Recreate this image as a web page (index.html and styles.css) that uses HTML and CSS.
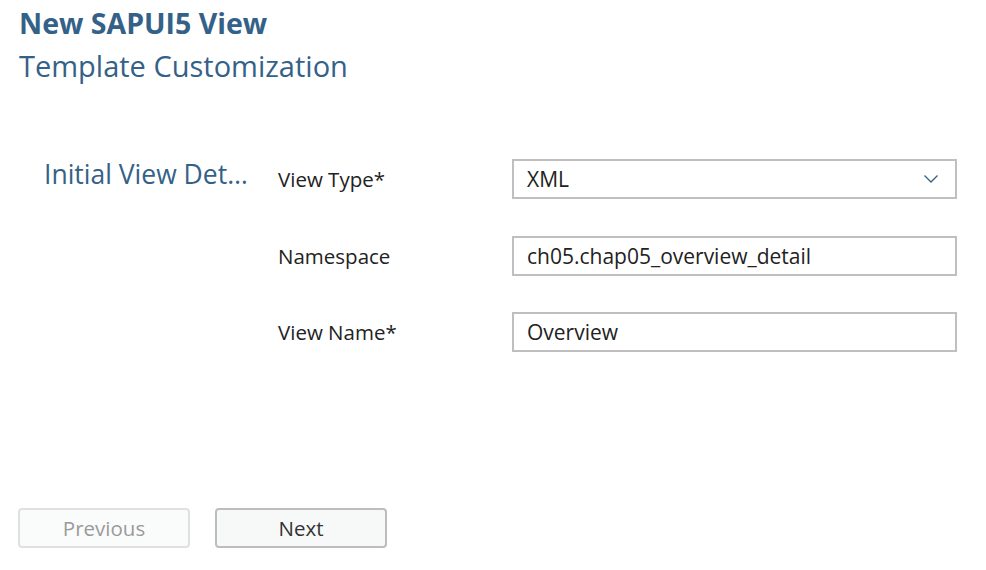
FILE: index.html
```html
<!DOCTYPE html>
<html>
<head>
<meta charset="utf-8">
<link rel="stylesheet" href="styles.css">
</head>
<body>
<div class="page">
  <header class="header">
    <h1 class="title">New SAPUI5 View</h1>
    <h2 class="subtitle">Template Customization</h2>
  </header>
  <section class="step">
    <div class="step-title">Initial View Details</div>
    <div class="form">
      <div class="row">
        <label class="label">View Type*</label>
        <div class="field select">
          <span>XML</span>
          <svg class="chev" width="16" height="10" viewBox="0 0 16 10"><path d="M1.5 1.5 L8 8 L14.5 1.5" fill="none" stroke="#346187" stroke-width="1.3"/></svg>
        </div>
      </div>
      <div class="row">
        <label class="label">Namespace</label>
        <div class="field">ch05.chap05_overview_detail</div>
      </div>
      <div class="row">
        <label class="label">View Name*</label>
        <div class="field">Overview</div>
      </div>
    </div>
  </section>
  <footer class="footer">
    <button class="btn disabled">Previous</button>
    <button class="btn">Next</button>
  </footer>
</div>
</body>
</html>
```
FILE: styles.css
```css
html, body {
  margin: 0;
  padding: 0;
  background: #ffffff;
}
.page {
  width: 986px;
  height: 570px;
  display: flex;
  flex-direction: column;
  font-family: "Open Sans", "Noto Sans", sans-serif;
  color: #222;
}
.header {
  padding: 4px 0 0 19px;
}
.title {
  margin: 0;
  font-size: 28.5px;
  font-weight: 700;
  line-height: 38px;
  color: #346187;
}
.subtitle {
  margin: 0;
  font-size: 29px;
  font-weight: 400;
  line-height: 48px;
  color: #346187;
}
.step {
  display: flex;
  margin-top: 69px;
}
.step-title {
  width: 208px;
  margin-left: 44px;
  margin-right: 26px;
  margin-top: -3px;
  font-size: 26.5px;
  line-height: 36px;
  color: #346187;
  white-space: nowrap;
  overflow: hidden;
  text-overflow: ellipsis;
}
.form {
  display: flex;
  flex-direction: column;
  gap: 36.5px;
}
.row {
  display: flex;
  align-items: center;
  height: 40px;
}
.label {
  width: 234px;
  font-size: 20.5px;
  color: #222;
}
.field {
  box-sizing: border-box;
  width: 445px;
  height: 40px;
  border: 2px solid #bfbfbf;
  padding: 0 13px;
  display: flex;
  align-items: center;
  font-size: 21px;
  color: #222;
}
.select {
  justify-content: space-between;
}
.chev {
  margin-right: 3px;
}
.footer {
  margin-top: auto;
  margin-bottom: 22px;
  padding-left: 18px;
  display: flex;
  gap: 25px;
}
.btn {
  box-sizing: border-box;
  width: 172px;
  height: 40px;
  border: 2px solid #bdbdbd;
  border-radius: 4px;
  background: #f7f8f8;
  font-family: "Open Sans", "Noto Sans", sans-serif;
  font-size: 20.5px;
  color: #333;
  padding: 0;
}
.btn.disabled {
  border-color: #e0e0e0;
  background: #fafbfb;
  color: #9a9a9a;
}
```
